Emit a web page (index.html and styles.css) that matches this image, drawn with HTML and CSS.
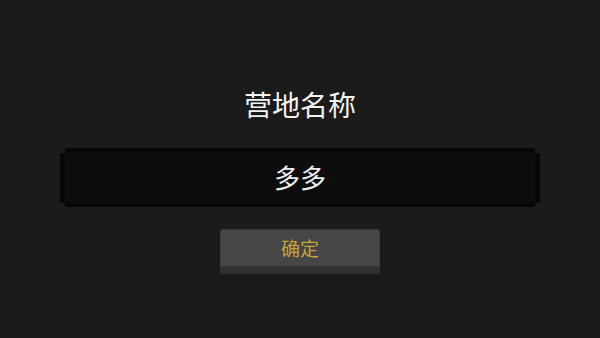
FILE: index.html
```html
<!DOCTYPE html>
<html lang="zh">
<head>
<meta charset="utf-8">
<link rel="stylesheet" href="styles.css">
</head>
<body>
<div class="page">
  <div class="title">营地名称</div>
  <div class="field">
    <div class="cap"></div>
    <div class="field-body">多多</div>
    <div class="cap"></div>
  </div>
  <button class="btn">确定</button>
</div>
</body>
</html>
```
FILE: styles.css
```css
html, body {
  margin: 0;
  padding: 0;
  background: #1b1b1b;
  width: 600px;
  height: 338px;
  overflow: hidden;
}
.page {
  display: flex;
  flex-direction: column;
  align-items: center;
  padding-top: 88px;
  font-family: "Noto Sans CJK SC", "Noto Sans", sans-serif;
}
.title {
  color: #f2f2f2;
  font-size: 28px;
  line-height: 32px;
  height: 32px;
}
.field {
  margin-top: 28px;
  display: flex;
  align-items: center;
  width: 480px;
}
.cap {
  width: 5px;
  height: 50px;
  background: #070707;
}
.field-body {
  width: 470px;
  height: 51px;
  border-top: 4px solid #070707;
  border-bottom: 4px solid #070707;
  background: #0d0d0d;
  color: #efefef;
  font-size: 26px;
  line-height: 50px;
  text-align: center;
}
.btn {
  margin-top: 22px;
  width: 160px;
  height: 38px;
  padding: 0;
  border: 1px solid #3a3a3a;
  border-radius: 3px;
  background: #464646;
  box-shadow: 0 7px 0 #313131;
  color: #c6a23f;
  font-family: "Noto Sans CJK SC", "Noto Sans", sans-serif;
  font-size: 19px;
  line-height: 36px;
}
```
